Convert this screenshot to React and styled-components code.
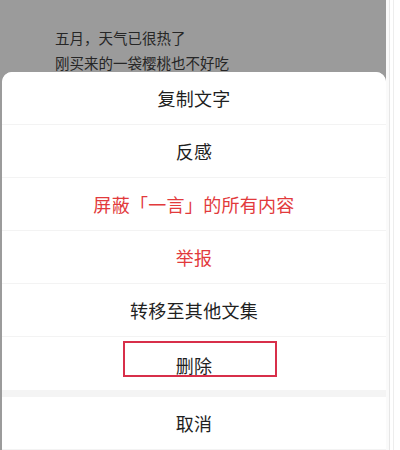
import React from 'react';
import styled, { createGlobalStyle } from 'styled-components';

const GlobalStyle = createGlobalStyle`
  html, body {
    margin: 0;
    padding: 0;
    background: #ffffff;
  }
  body {
    font-family: "Noto Sans", "Noto Sans CJK SC", sans-serif;
  }
`;

const Page = styled.div`
  display: flex;
  width: 400px;
  height: 450px;
  overflow: hidden;
`;

const Screen = styled.div`
  width: 386px;
  display: flex;
  flex-direction: column;
  background-color: #9b9b9b;
`;

// thin strip on the right edge of the screenshot
const Rail = styled.div`
  flex: 1;
  background: #ffffff;
  border-left: 3px solid #fafafa;
  box-shadow: inset 1px 0 0 #e6e6e6, inset 4px 0 0 #ffffff, inset 5px 0 0 #ededed;
`;

const Backdrop = styled.div`
  height: 72px;
  box-sizing: border-box;
  padding: 27px 0 0 55px;
  font-family: "Liberation Serif", "Noto Sans CJK SC", serif;
  font-size: 14.5px;
  line-height: 25px;
  color: #262626;
`;

const Sheet = styled.div`
  flex: 1;
  display: flex;
  flex-direction: column;
  background: #f4f4f4;
  border-radius: 10px 10px 0 0;
  overflow: hidden;
  margin-left: 2px;
`;

const Row = styled.div`
  position: relative;
  height: 52px;
  flex-shrink: 0;
  display: flex;
  align-items: center;
  justify-content: center;
  background: #ffffff;
  border-bottom: 1px solid ${p => (p.$last ? 'transparent' : '#f3f3f3')};
  margin-bottom: ${p => (p.$last ? '7px' : '0')};
  font-family: "Noto Sans CJK SC", sans-serif;
  font-size: 18px;
  color: ${p => (p.$danger ? '#e23a3c' : '#1f1f1f')};
  letter-spacing: 0.3px;
`;

const Label = styled.span`
  transform: translateY(${p => p.$shift || 0}px);
`;

// red annotation box drawn over the delete row
const Highlight = styled.div`
  position: absolute;
  left: 121px;
  top: 4px;
  width: 154px;
  height: 36px;
  border: 2px solid #d82f4a;
  box-sizing: border-box;
  pointer-events: none;
`;

const items = [
  { text: '复制文字' },
  { text: '反感' },
  { text: '屏蔽「一言」的所有内容', danger: true },
  { text: '举报', danger: true },
  { text: '转移至其他文集' },
];

const App = () => {
  return (
    <>
      <GlobalStyle />
      <Page>
        <Screen>
          <Backdrop>
            <div>五月，天气已很热了</div>
            <div>刚买来的一袋樱桃也不好吃</div>
          </Backdrop>
          <Sheet>
            {items.map(item => (
              <Row key={item.text} $danger={item.danger}>
                {item.text}
              </Row>
            ))}
            <Row $last>
              <Label $shift={2}>删除</Label>
              <Highlight />
            </Row>
            <Row>取消</Row>
          </Sheet>
        </Screen>
        <Rail />
      </Page>
    </>
  );
};

export default App;
